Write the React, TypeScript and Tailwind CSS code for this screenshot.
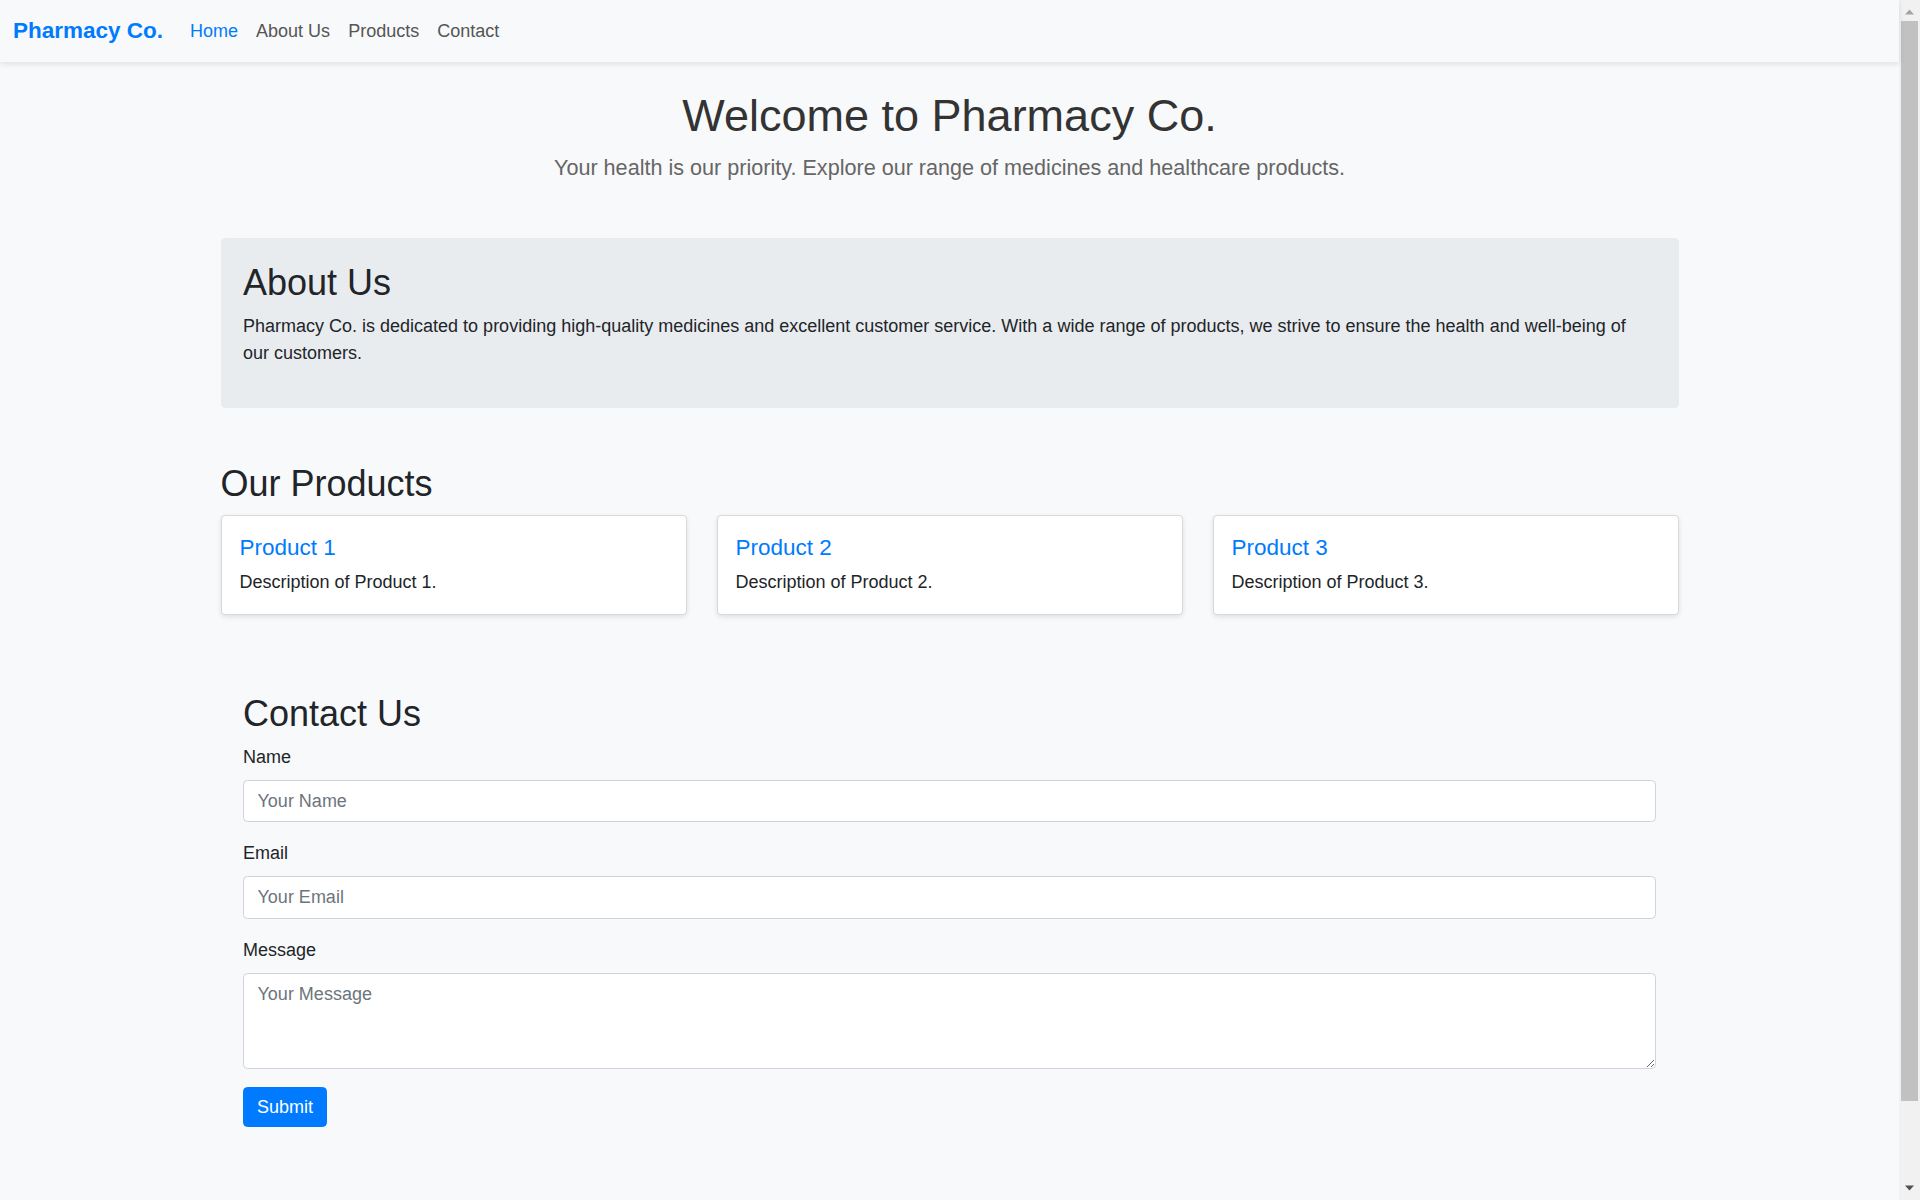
import React from "react";

const links = [
	{ label: "Home", active: true },
	{ label: "About Us", active: false },
	{ label: "Products", active: false },
	{ label: "Contact", active: false },
];

const products = [
	{ name: "Product 1", text: "Description of Product 1." },
	{ name: "Product 2", text: "Description of Product 2." },
	{ name: "Product 3", text: "Description of Product 3." },
];

function Navbar() {
	return (
		<nav className="h-[62px] flex items-center pl-[13px] bg-[#f8f9fa] shadow-[0_2px_6px_rgba(0,0,0,0.1)] relative z-10">
			<a href="#" className="text-[22.5px] font-bold text-[#007bff] mr-[18px] leading-none">
				Pharmacy Co.
			</a>
			<ul className="flex items-center">
				{links.map((link) => (
					<li key={link.label}>
						<a
							href="#"
							className={
								link.active
									? "block px-[9px] text-[18px] text-[#007bff]"
									: "block px-[9px] text-[18px] text-[#555]"
							}
						>
							{link.label}
						</a>
					</li>
				))}
			</ul>
		</nav>
	);
}

function Field({ label, placeholder, type }: { label: string; placeholder: string; type: string }) {
	return (
		<div className="mb-[18px]">
			<label className="block mb-[9px] leading-[27px] text-[#212529]">{label}</label>
			<input
				type={type}
				placeholder={placeholder}
				className="block w-full h-[42.5px] px-[13.5px] bg-white border border-[#ced4da] rounded-[4.5px] text-[18px] placeholder:text-[#6c757d] outline-none"
			/>
		</div>
	);
}

function Scrollbar() {
	return (
		<div className="w-[21px] shrink-0 h-screen bg-[#f1f1f1] flex flex-col items-center">
			<svg width="9" height="21" viewBox="0 0 9 21" className="shrink-0">
				<polygon points="0,14.5 4.5,9.5 9,14.5" fill="#a3a3a3" />
			</svg>
			<div className="w-[17px] h-[1080px] bg-[#c1c1c1] shrink-0" />
			<div className="flex-1" />
			<svg width="9" height="20" viewBox="0 0 9 20" className="shrink-0">
				<polygon points="0,5.5 9,5.5 4.5,10.5" fill="#505050" />
			</svg>
		</div>
	);
}

export default function App() {
	return (
		<div className="h-screen flex overflow-hidden bg-[#f8f9fa] text-[18px] leading-[1.5] text-[#212529] font-['Liberation_Sans',Arial,sans-serif]">
			<div className="flex-1 min-w-0">
				<Navbar />
				<main className="w-[1458px] mx-auto pb-[88px]">
					<header className="pt-[27px] mb-[54px] text-center">
						<h1 className="text-[45px] leading-[1.2] text-[#333] mb-[9px]">Welcome to Pharmacy Co.</h1>
						<p className="text-[21.6px] leading-[1.5] text-[#666]">
							Your health is our priority. Explore our range of medicines and healthcare products.
						</p>
					</header>

					<section className="bg-[#e9ecef] rounded-[4.5px] p-[22.5px] pb-[23px] mb-[54px]">
						<h2 className="text-[36px] leading-[1.2] mb-[9px]">About Us</h2>
						<p className="leading-[27px] mb-[18px]">
							Pharmacy Co. is dedicated to providing high-quality medicines and excellent customer service. With a wide
							range of products, we strive to ensure the health and well-being of our customers.
						</p>
					</section>

					<section className="mb-[54px]">
						<h2 className="text-[36px] leading-[1.2] mb-[10px]">Our Products</h2>
						<div className="grid grid-cols-3 gap-[30px]">
							{products.map((p) => (
								<div
									key={p.name}
									className="bg-white border border-[rgba(0,0,0,0.15)] rounded-[4.5px] shadow-[0_2px_5px_rgba(0,0,0,0.1)] p-[18px]"
								>
									<h3 className="text-[22.5px] leading-[1.2] text-[#007bff] mb-[8px]">{p.name}</h3>
									<p className="leading-[27px]">{p.text}</p>
								</div>
							))}
						</div>
					</section>

					<section className="p-[22.5px]">
						<h2 className="text-[36px] leading-[1.2] mb-[9px]">Contact Us</h2>
						<form onSubmit={(e) => e.preventDefault()}>
							<Field label="Name" placeholder="Your Name" type="text" />
							<Field label="Email" placeholder="Your Email" type="email" />
							<div className="mb-[18px]">
								<label className="block mb-[9px] leading-[27px]">Message</label>
								<textarea
									rows={3}
									placeholder="Your Message"
									className="block w-full h-[96.5px] px-[13.5px] py-[6.75px] leading-[27px] bg-white border border-[#ced4da] rounded-[4.5px] text-[18px] placeholder:text-[#6c757d] outline-none"
								/>
							</div>
							<button
								type="submit"
								className="h-[39.5px] px-[13px] bg-[#007bff] text-white text-[18px] leading-[27px] rounded-[4.5px] border border-[#007bff]"
							>
								Submit
							</button>
						</form>
					</section>
				</main>
			</div>
			<Scrollbar />
		</div>
	);
}
